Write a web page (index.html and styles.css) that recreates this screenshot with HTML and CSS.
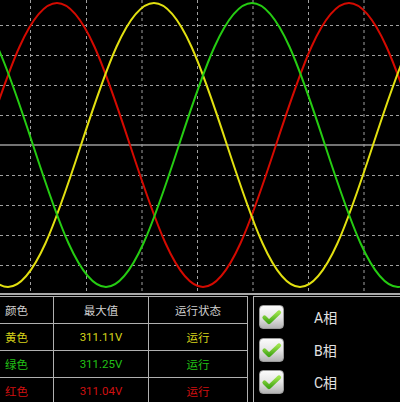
FILE: index.html
```html
<!DOCTYPE html>
<html>
<head>
<meta charset="utf-8">
<link rel="stylesheet" href="styles.css">
</head>
<body>
<div class="scope">
<svg class="plot" width="400" height="293" viewBox="0 0 400 293">
  <g class="grid">
    <line x1="0" y1="25.5" x2="400" y2="25.5"/>
    <line x1="0" y1="55.5" x2="400" y2="55.5"/>
    <line x1="0" y1="85.5" x2="400" y2="85.5"/>
    <line x1="0" y1="115.5" x2="400" y2="115.5"/>
    <line x1="0" y1="175.5" x2="400" y2="175.5"/>
    <line x1="0" y1="205.5" x2="400" y2="205.5"/>
    <line x1="0" y1="235.5" x2="400" y2="235.5"/>
    <line x1="0" y1="265.5" x2="400" y2="265.5"/>
    <line x1="30.5" y1="0" x2="30.5" y2="293"/>
    <line x1="86.5" y1="0" x2="86.5" y2="293"/>
    <line x1="142" y1="0" x2="142" y2="293"/>
    <line x1="197.5" y1="0" x2="197.5" y2="293"/>
    <line x1="253" y1="0" x2="253" y2="293"/>
    <line x1="308.5" y1="0" x2="308.5" y2="293"/>
    <line x1="364" y1="0" x2="364" y2="293"/>
  </g>
  <line class="axis" x1="0" y1="145" x2="400" y2="145"/>
  <path class="wave red" transform="translate(-308,145) scale(46.473,-142)" d="M0,0 C0.5123,0.5123 1.0023,1 1.5708,1 S2.6293,0.5123 3.1416,0 S4.1439,-1 4.7124,-1 S5.7709,-0.5123 6.2832,0 S7.2855,1 7.854,1 S8.9125,0.5123 9.4248,0 S10.4271,-1 10.9956,-1 S12.0541,-0.5123 12.5664,0 S13.5687,1 14.1372,1 S15.1957,0.5123 15.708,0 S16.7103,-1 17.2788,-1 S18.3373,-0.5123 18.8496,0 S19.8519,1 20.4204,1 S21.4788,0.5123 21.9911,0 S22.9934,-1 23.5619,-1 S24.6204,-0.5123 25.1327,0"/>
  <path class="wave yellow" transform="translate(-211,145) scale(46.473,-142)" d="M0,0 C0.5123,0.5123 1.0023,1 1.5708,1 S2.6293,0.5123 3.1416,0 S4.1439,-1 4.7124,-1 S5.7709,-0.5123 6.2832,0 S7.2855,1 7.854,1 S8.9125,0.5123 9.4248,0 S10.4271,-1 10.9956,-1 S12.0541,-0.5123 12.5664,0 S13.5687,1 14.1372,1 S15.1957,0.5123 15.708,0 S16.7103,-1 17.2788,-1 S18.3373,-0.5123 18.8496,0 S19.8519,1 20.4204,1 S21.4788,0.5123 21.9911,0 S22.9934,-1 23.5619,-1 S24.6204,-0.5123 25.1327,0"/>
  <path class="wave green" transform="translate(-113,145) scale(46.473,-142)" d="M0,0 C0.5123,0.5123 1.0023,1 1.5708,1 S2.6293,0.5123 3.1416,0 S4.1439,-1 4.7124,-1 S5.7709,-0.5123 6.2832,0 S7.2855,1 7.854,1 S8.9125,0.5123 9.4248,0 S10.4271,-1 10.9956,-1 S12.0541,-0.5123 12.5664,0 S13.5687,1 14.1372,1 S15.1957,0.5123 15.708,0 S16.7103,-1 17.2788,-1 S18.3373,-0.5123 18.8496,0 S19.8519,1 20.4204,1 S21.4788,0.5123 21.9911,0 S22.9934,-1 23.5619,-1 S24.6204,-0.5123 25.1327,0"/>
</svg>
</div>
<div class="bottom">
  <div class="table">
    <div class="cell head left">颜色</div>
    <div class="cell head">最大值</div>
    <div class="cell head">运行状态</div>
    <div class="cell left c-yellow">黄色</div>
    <div class="cell c-yellow">311.11V</div>
    <div class="cell c-yellow">运行</div>
    <div class="cell left c-green">绿色</div>
    <div class="cell c-green">311.25V</div>
    <div class="cell c-green">运行</div>
    <div class="cell left c-red">红色</div>
    <div class="cell c-red">311.04V</div>
    <div class="cell c-red">运行</div>
  </div>
  <div class="panel">
    <div class="opt">
      <span class="box"><svg width="25" height="24" viewBox="0 0 25 24"><defs><linearGradient id="gk" x1="0" y1="0" x2="0" y2="1"><stop offset="0" stop-color="#9be24a"/><stop offset="1" stop-color="#45a817"/></linearGradient></defs><path class="tick" d="M5.5,12.5 L10,17 L20,7.5"/></svg></span>
      <span class="lbl">A相</span>
    </div>
    <div class="opt">
      <span class="box"><svg width="25" height="24" viewBox="0 0 25 24"><path class="tick" d="M5.5,12.5 L10,17 L20,7.5"/></svg></span>
      <span class="lbl">B相</span>
    </div>
    <div class="opt">
      <span class="box"><svg width="25" height="24" viewBox="0 0 25 24"><path class="tick" d="M5.5,12.5 L10,17 L20,7.5"/></svg></span>
      <span class="lbl">C相</span>
    </div>
  </div>
</div>
</body>
</html>
```
FILE: styles.css
```css
html, body {
  margin: 0;
  padding: 0;
  background: #000;
  width: 400px;
  height: 402px;
  overflow: hidden;
  font-family: Roboto, "Noto Sans CJK SC", sans-serif;
}
.scope {
  height: 293px;
  border-bottom: 2px solid #a8a8a8;
}
.plot {
  display: block;
}
.grid line {
  stroke: #a0a0a0;
  stroke-width: 1;
  stroke-dasharray: 3 3;
}
.axis {
  stroke: #9a9a9a;
  stroke-width: 1.6;
}
.wave {
  fill: none;
  stroke-width: 2;
  vector-effect: non-scaling-stroke;
}
.red { stroke: #d40a00; }
.yellow { stroke: #e2e010; }
.green { stroke: #25cc12; }

.bottom {
  margin-top: 1px;
  display: flex;
  gap: 5px;
}
.table {
  display: grid;
  grid-template-columns: 54px 95px 99px;
  grid-template-rows: 27px 27px 27px 27px;
  border-top: 1px solid #b0b0b0;
  width: 248px;
}
.cell {
  box-sizing: border-box;
  border-right: 1px solid #b0b0b0;
  border-bottom: 1px solid #b0b0b0;
  display: flex;
  align-items: center;
  justify-content: center;
  font-size: 11.5px;
  padding-bottom: 1px;
}
.cell.left {
  justify-content: flex-start;
  padding-left: 5px;
}
.head { color: #cfcfcf; }
.c-yellow { color: #d6d41a; }
.c-green { color: #22c016; }
.c-red { color: #d01010; }

.panel {
  flex: 1;
  border-top: 1px solid #b0b0b0;
  border-left: 1px solid #b0b0b0;
  padding: 8px 0 0 5px;
  display: flex;
  flex-direction: column;
  gap: 8.5px;
  height: 110px;
}
.opt {
  display: flex;
  align-items: center;
  gap: 30px;
  height: 24px;
}
.box {
  width: 25px;
  height: 24px;
  box-sizing: border-box;
  border-radius: 4px;
  border: 1px solid #9a9a9a;
  background: linear-gradient(#fbfbfb, #e6e6e6 50%, #b4b4b4);
  display: block;
  overflow: hidden;
}
.box svg {
  display: block;
  margin: -1px 0 0 -1px;
}
.tick {
  fill: none;
  stroke: url(#gk);
  stroke-width: 4.2;
  stroke-linecap: round;
  stroke-linejoin: round;
}
.lbl {
  color: #e2e2e2;
  font-size: 14px;
}
```
